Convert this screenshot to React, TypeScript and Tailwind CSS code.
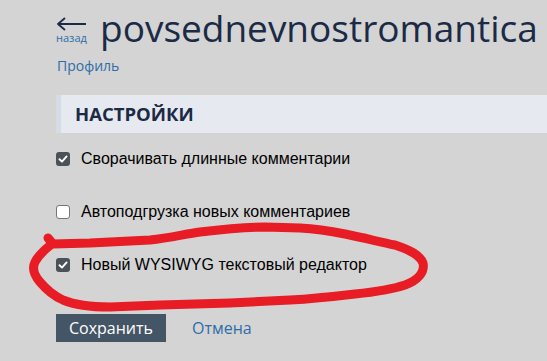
import { useState } from 'react'

const sans = "font-['Open_Sans',sans-serif]"
const arial = "font-['Liberation_Sans',Arial,sans-serif]"

interface OptionProps {
  label: string
  checked: boolean
  onToggle: () => void
}

function Option({ label, checked, onToggle }: OptionProps) {
  return (
    <label className="flex h-[20px] cursor-pointer items-center gap-[11px]">
      <span
        onClick={onToggle}
        className={`flex h-[14px] w-[14px] items-center justify-center rounded-[3px] ${
          checked ? 'bg-[#4b5159]' : 'border border-[#767676] bg-white'
        }`}
      >
        {checked && (
          <svg width="10" height="10" viewBox="0 0 10 10" fill="none">
            <path
              d="M1.5 5.2 L4 7.6 L8.6 2.4"
              stroke="white"
              strokeWidth="1.9"
              strokeLinecap="round"
              strokeLinejoin="round"
            />
          </svg>
        )}
      </span>
      <span className={`${arial} text-[16px] text-black`}>{label}</span>
    </label>
  )
}

export default function App() {
  const [opts, setOpts] = useState([true, false, true])
  const toggle = (i: number) =>
    setOpts((o) => o.map((v, j) => (j === i ? !v : v)))

  return (
    <div className={`relative h-[361px] w-[547px] overflow-hidden bg-[#d4d4d4] pl-[56px] ${sans}`}>
      <div className="flex items-start pt-[5px]">
        <a className="flex w-[44px] flex-col items-start pt-[12px]">
          <svg width="30" height="14" viewBox="0 0 30 14" fill="none" className="ml-[1px]">
            <path d="M1 7 H29 M8 1 L1 7 L8 13" stroke="#1b2a45" strokeWidth="1.8" strokeLinejoin="round" />
          </svg>
          <span className="mt-[1px] text-[11px] leading-[12px] text-[#2e6da8]">назад</span>
        </a>
        <h1 className="text-[37px] leading-[45px] font-normal text-[#1b2a45]">
          povsednevnostromantica
        </h1>
      </div>

      <a className="mt-[6px] ml-[1px] block text-[14px] leading-[20px] text-[#2e6da8]">Профиль</a>

      <div className="mt-[19px] flex h-[38px] items-center border-l-[5px] border-[#d6dce6] bg-[#e6e9ef] pl-[14px]">
        <h2 className="text-[18.5px] font-bold text-[#1b2a45]">НАСТРОЙКИ</h2>
      </div>

      <div className="mt-[16px] flex flex-col gap-[33px]">
        <Option label="Сворачивать длинные комментарии" checked={opts[0]} onToggle={() => toggle(0)} />
        <Option label="Автоподгрузка новых комментариев" checked={opts[1]} onToggle={() => toggle(1)} />
        <Option label="Новый WYSIWYG текстовый редактор" checked={opts[2]} onToggle={() => toggle(2)} />
      </div>

      <div className="mt-[39px] flex items-center gap-[26px]">
        <button className="h-[28px] w-[110px] bg-[#445566] text-[16px] text-white">Сохранить</button>
        <a className="text-[16px] text-[#2e6da8]">Отмена</a>
      </div>

      <svg
        className="pointer-events-none absolute top-0 left-0"
        width="547"
        height="361"
        viewBox="0 0 547 361"
        fill="none"
      >
        <path
          d="M48 238 L53 244 L90 243 L150 240 C170 238 185 234 200 232 C225 229 245 227 265 227 L300 228 C320 229 330 231 345 234 C365 238 380 242 395 245 C410 250 420 255 423 263 C425 272 418 280 405 285 C390 290 375 292 355 294 C330 297 310 299 290 300 L230 303 L160 305 L110 307 C90 307 75 305 63 300 C52 295 45 288 40 282 C34 275 32 268 35 262 C38 256 44 250 52 244"
          stroke="#e81c24"
          strokeWidth="9"
          strokeLinecap="round"
          strokeLinejoin="round"
        />
      </svg>
    </div>
  )
}
